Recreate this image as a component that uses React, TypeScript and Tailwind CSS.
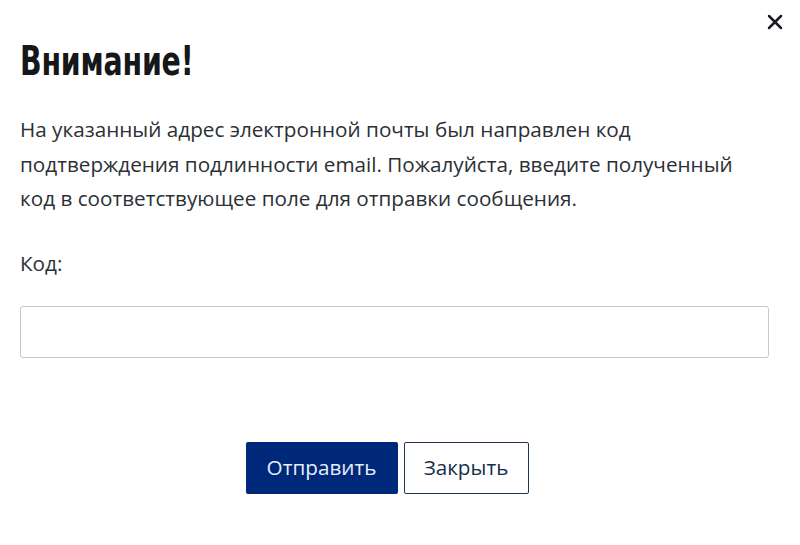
import { X } from "lucide-react";

export default function App() {
  return (
    <div className="h-[545px] w-[800px] bg-white font-['Open_Sans',sans-serif] text-[#2b3035]">
      <div className="relative pl-5 pr-[31px] pt-[36px]">
        <button
          type="button"
          aria-label="Закрыть"
          className="absolute right-[13px] top-[10px] text-[#1a1d21]"
        >
          <X className="size-[24px]" strokeWidth={2.5} />
        </button>

        {/* condensed heading face: squeeze DejaVu bold horizontally */}
        <h2 className="origin-left scale-x-[0.71] font-['DejaVu_Sans',sans-serif] text-[40px] leading-[50px] font-bold tracking-[-0.3px] text-[#151719]">
          Внимание!
        </h2>

        <p className="mt-[26px] text-[20.7px] leading-[34.5px]">
          На указанный адрес электронной почты был направлен код
          <br />
          подтверждения подлинности email. Пожалуйста, введите полученный
          <br />
          код в соответствующее поле для отправки сообщения.
        </p>

        <label htmlFor="code" className="mt-[30px] block text-[20.7px] leading-[34px]">
          Код:
        </label>

        <input
          id="code"
          type="text"
          className="mt-[26px] block h-[52px] w-full rounded-[3px] border border-[#c3cad1] px-3 text-[19px] outline-none"
        />

        <div className="mt-[84px] flex justify-center gap-[6px] pr-[15px]">
          <button
            type="button"
            className="h-[52px] w-[152px] rounded-[2px] bg-[#00287a] text-[20.7px] text-[#e6eef8]"
          >
            Отправить
          </button>
          <button
            type="button"
            className="h-[52px] w-[125px] rounded-[2px] border border-[#1f3550] bg-white text-[20.7px] text-[#15304f]"
          >
            Закрыть
          </button>
        </div>
      </div>
    </div>
  );
}
